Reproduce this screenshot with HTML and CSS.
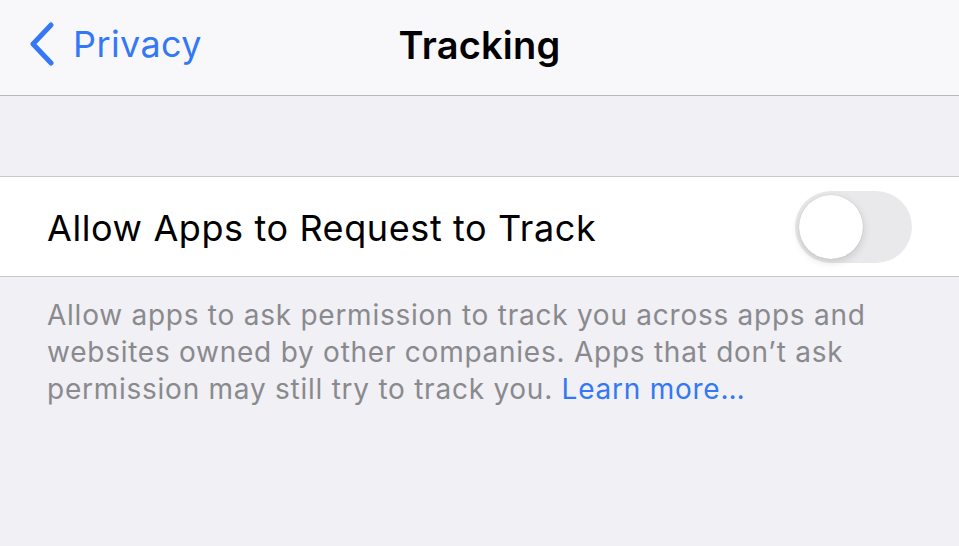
FILE: index.html
```html
<!DOCTYPE html>
<html lang="en">
<head>
  <meta charset="UTF-8">
  <title>Tracking</title>
  <link rel="stylesheet" href="styles.css">
</head>
<body>
  <header class="navbar">
    <a class="back" href="#">
      <svg class="chevron" width="26" height="44" viewBox="0 0 26 44">
        <path d="M22 3 L4 22 L22 41" fill="none" stroke="#3478f6" stroke-width="5" stroke-linecap="round" stroke-linejoin="round"/>
      </svg>
      <span>Privacy</span>
    </a>
    <h1 class="title">Tracking</h1>
  </header>

  <div class="spacer"></div>

  <section class="group">
    <div class="cell">
      <span class="cell-label">Allow Apps to Request to Track</span>
      <span class="switch"><span class="knob"></span></span>
    </div>
  </section>

  <p class="footer">
    Allow apps to ask permission to track you across apps and websites owned by other companies. Apps that don’t ask permission may still try to track you. <a href="#">Learn more…</a>
  </p>
</body>
</html>
```

FILE: styles.css
```css
body {
  margin: 0;
  background: #f0f0f5;
  font-family: Inter, "Noto Sans", sans-serif;
  height: 546px;
  overflow: hidden;
}
.navbar {
  height: 95px;
  background: #f8f8fa;
  border-bottom: 1px solid #b9b9bd;
  display: flex;
  align-items: center;
  justify-content: center;
  position: relative;
}
.back {
  position: absolute;
  left: 29px;
  top: 22px;
  display: flex;
  align-items: center;
  gap: 18px;
  color: #3478f6;
  text-decoration: none;
  font-size: 36px;
  letter-spacing: 0.4px;
}
.chevron { display: block; }
.title {
  margin: 0 0 6px;
  font-size: 38px;
  font-weight: 600;
  letter-spacing: 0.2px;
  color: #000;
}
.spacer { height: 80px; }
.group {
  background: #fff;
  border-top: 1px solid #c8c8cc;
  border-bottom: 1px solid #c8c8cc;
}
.cell {
  height: 99px;
  display: flex;
  align-items: center;
  justify-content: space-between;
  padding: 0 47px;
}
.cell-label {
  font-size: 36px;
  letter-spacing: 0.6px;
  color: #000;
  margin-top: 2px;
}
.switch {
  width: 117px;
  height: 72px;
  border-radius: 36px;
  background: #e9e9eb;
  display: flex;
  align-items: center;
  padding: 0 4px;
  box-sizing: border-box;
}
.knob {
  width: 64px;
  height: 64px;
  border-radius: 50%;
  background: #fff;
  box-shadow: 0 3px 8px rgba(0,0,0,0.15), 0 0 1px rgba(0,0,0,0.2);
}
.footer {
  margin: 0;
  padding: 20px 47px 0;
  font-size: 28px;
  line-height: 37px;
  letter-spacing: 0.75px;
  color: #8a8a8e;
}
.footer a {
  color: #3478f6;
  text-decoration: none;
}
```
